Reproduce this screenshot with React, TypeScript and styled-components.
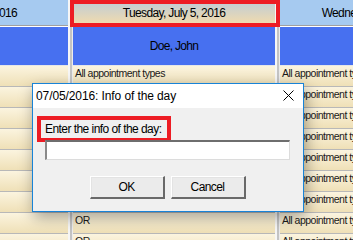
import styled, { createGlobalStyle } from 'styled-components';

const GlobalStyle = createGlobalStyle`
  html, body {
    margin: 0;
    padding: 0;
    background: #fff;
  }

  body {
    width: 353px;
    height: 240px;
    overflow: hidden;
    font-family: "Liberation Sans", Arial, sans-serif;
    color: #000;
  }
`;

type Day = {
  label: string;
  owner: string;
  active?: boolean;
  slots: string[];
};

const days: Day[] = [
  {
    label: 'Monday, July 4, 2016',
    owner: 'Doe, John',
    slots: ['', '', '', '', '', '', '', '', ''],
  },
  {
    label: 'Tuesday, July 5, 2016',
    owner: 'Doe, John',
    active: true,
    // rows 2-7 sit under the dialog
    slots: ['All appointment types', '', '', '', '', '', '', 'OR', 'OR'],
  },
  {
    label: 'Wednesday, July 6, 2016',
    owner: 'Doe, John',
    slots: Array(9).fill('All appointment types'),
  },
];

function CloseIcon() {
  return (
    <svg width="11" height="11" viewBox="0 0 11 11">
      <path d="M0.5 0.5 L10.5 10.5 M10.5 0.5 L0.5 10.5" stroke="#000" strokeWidth="1" />
    </svg>
  );
}

function InfoDialog() {
  return (
    <Dialog>
      <TitleBar>
        <TitleText>07/05/2016: Info of the day</TitleText>
        <CloseButton>
          <CloseIcon />
        </CloseButton>
      </TitleBar>
      <DialogBody>
        <Prompt>Enter the info of the day:</Prompt>
        <InfoInput type="text" />
        <ButtonRow>
          <DialogButton>OK</DialogButton>
          <DialogButton>Cancel</DialogButton>
        </ButtonRow>
      </DialogBody>
    </Dialog>
  );
}

export default function App() {
  return (
    <Screen>
      <GlobalStyle />
      <Board>
        {days.map((day) => (
          <DayGroup key={day.label}>
            <DayColumn>
              <DayHeader $active={day.active}>
                {day.label}
                {day.active && <Highlight />}
              </DayHeader>
              <Owner>{day.owner}</Owner>
              {day.slots.map((slot, i) => (
                <Slot key={i}>{slot}</Slot>
              ))}
            </DayColumn>
            <Splitter />
          </DayGroup>
        ))}
      </Board>
      <InfoDialog />
    </Screen>
  );
}

const Screen = styled.div`
  position: relative;
  width: 353px;
  height: 240px;
  overflow: hidden;
  background: #fff;
`;

const Board = styled.div`
  display: flex;
  margin-left: -134px;
`;

const DayGroup = styled.div`
  display: flex;
  flex: none;
`;

const DayColumn = styled.div`
  display: flex;
  flex-direction: column;
  width: 202px;
`;

const Splitter = styled.div`
  width: 5px;
  background: linear-gradient(to right, #f6f6f6 0 2px, #c4c4c4 2px 4px, #ececec 4px 5px);
`;

const DayHeader = styled.div<{ $active?: boolean }>`
  position: relative;
  height: 25px;
  border-bottom: 1px solid #a0a0a0;
  display: flex;
  align-items: center;
  justify-content: center;
  white-space: nowrap;
  font-size: 12px;
  letter-spacing: -0.65px;
  background: ${(p) => (p.$active ? 'linear-gradient(#bccbd9, #f4dcab)' : '#a6caf0')};
`;

const Highlight = styled.div`
  position: absolute;
  top: 0;
  bottom: -2px;
  left: -3px;
  right: -5px;
  border: 4px solid #ed1c24;
  z-index: 2;
`;

const Owner = styled.div`
  height: 38px;
  margin-top: 1px;
  border-bottom: 1px solid #e6e6e6;
  display: flex;
  align-items: center;
  justify-content: center;
  white-space: nowrap;
  font-size: 12px;
  letter-spacing: -0.7px;
  background: #4770f0;
`;

const Slot = styled.div`
  box-sizing: border-box;
  height: 21px;
  padding: 1px 0 0 2px;
  border-bottom: 1px solid #b8b8b8;
  line-height: 12px;
  white-space: nowrap;
  overflow: hidden;
  font-size: 10.5px;
  letter-spacing: -0.5px;
  color: #1a1a1a;
  background: linear-gradient(#fbf4df, #efe0b7);
`;

const Dialog = styled.div`
  position: absolute;
  left: 32px;
  top: 83px;
  width: 272px;
  height: 129px;
  box-sizing: border-box;
  display: flex;
  flex-direction: column;
  border: 1px solid #1883d7;
  background: #f0f0f0;
  box-shadow: 2px 5px 14px rgba(0, 0, 0, 0.35);
`;

const TitleBar = styled.div`
  height: 23px;
  display: flex;
  align-items: center;
  justify-content: space-between;
  padding: 0 9px 1px 3px;
  background: #fff;
`;

const TitleText = styled.span`
  font-size: 12px;
  letter-spacing: -0.1px;
  white-space: nowrap;
`;

const CloseButton = styled.span`
  display: flex;
  align-items: center;
`;

const DialogBody = styled.div`
  flex: 1;
  display: flex;
  flex-direction: column;
  padding: 8px 13px 0 4px;
`;

const Prompt = styled.div`
  align-self: flex-start;
  height: 18px;
  padding: 0 6px 0 4px;
  border: 4px solid #ed1c24;
  line-height: 18px;
  white-space: nowrap;
  font-size: 12px;
  letter-spacing: -0.55px;
`;

const InfoInput = styled.input`
  box-sizing: border-box;
  width: 245px;
  height: 20px;
  margin: -2px 0 0 8px;
  padding: 0;
  border-style: solid;
  border-width: 2px 1px 1px 2px;
  border-color: #6e6e6e #dcdcdc #dcdcdc #8a8a8a;
  background: #fff;
  outline: none;
`;

const ButtonRow = styled.div`
  display: flex;
  justify-content: center;
  gap: 6px;
  margin: 16px 0 0 8px;
`;

const DialogButton = styled.button`
  box-sizing: border-box;
  width: 75px;
  height: 23px;
  padding: 0;
  border-style: solid;
  border-width: 1px 2px 2px 1px;
  border-color: #fff #696969 #696969 #fff;
  box-shadow: inset 1px 1px #e3e3e3;
  font-family: "Liberation Sans", Arial, sans-serif;
  font-size: 12px;
  letter-spacing: -0.6px;
  color: #000;
  background: #ebebeb;
`;
